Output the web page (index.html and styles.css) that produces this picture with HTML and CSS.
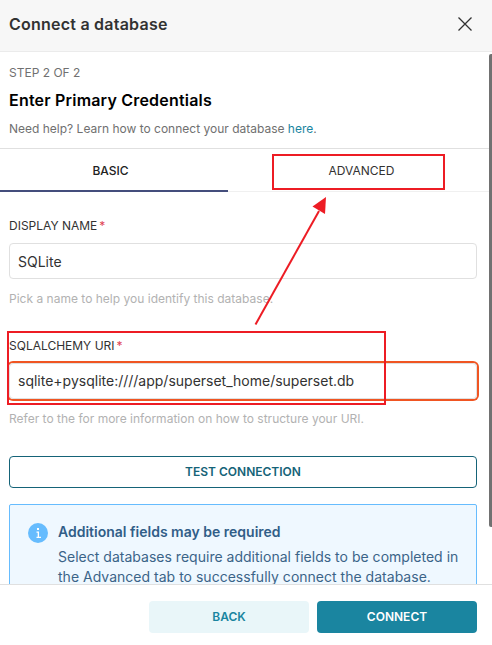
FILE: index.html
```html
<!DOCTYPE html>
<html lang="en">
<head>
<meta charset="utf-8">
<title>Connect a database</title>
<link rel="stylesheet" href="styles.css">
</head>
<body>
<div class="modal">
  <header class="header">
    <h1 class="title">Connect a database</h1>
    <svg class="close" width="14" height="14" viewBox="0 0 14 14"><path d="M.5.5l13 13M13.5.5l-13 13"/></svg>
  </header>
  <main class="body">
    <section class="intro">
      <p class="step">STEP 2 OF 2</p>
      <h2 class="heading">Enter Primary Credentials</h2>
      <p class="help">Need help? Learn how to connect your database <a class="link">here</a>.</p>
    </section>
    <nav class="tabs">
      <div class="tab tab-active">BASIC</div>
      <div class="tab">ADVANCED</div>
    </nav>
    <div class="form">
      <div class="field">
        <div class="label">DISPLAY NAME<span class="required">*</span></div>
        <div class="input">SQLite</div>
        <div class="hint">Pick a name to help you identify this database.</div>
      </div>
      <div class="field">
        <div class="label">SQLALCHEMY URI<span class="required">*</span></div>
        <div class="input input-focus">sqlite+pysqlite:////app/superset_home/superset.db</div>
        <div class="hint">Refer to the for more information on how to structure your URI.</div>
      </div>
      <div class="button test">TEST CONNECTION</div>
      <div class="alert">
        <svg class="info" width="20" height="20" viewBox="0 0 20 20"><circle cx="10" cy="10" r="10" fill="#66bcfe"/><path d="M9 5h2v2H9zM8.500 8.500H11v5.200h2V15H8.500v-1.300H9.700V9.800H8.500z" fill="#fff"/></svg>
        <div class="alert-text">
          <div class="alert-title">Additional fields may be required</div>
          <div class="alert-body">Select databases require additional fields to be completed in the Advanced tab to successfully connect the database.</div>
        </div>
      </div>
    </div>
  </main>
  <footer class="footer">
    <div class="button back">BACK</div>
    <div class="button connect">CONNECT</div>
  </footer>
  <div class="scrollbar"></div>
  <svg class="annotations" width="492" height="645" viewBox="0 0 492 645">
    <rect x="273" y="155" width="171" height="34"/>
    <rect x="8" y="332" width="377" height="72"/>
    <path d="M255.500 324.500L319 211"/>
    <path class="arrowhead" d="M326 197L312.500 206.500L325 214Z"/>
  </svg>
</div>
</body>
</html>
```
FILE: styles.css
```css
* { box-sizing: border-box; }
body {
  margin: 0;
  font-family: Inter, "Liberation Sans", sans-serif;
  font-size: 14px;
  color: #323232;
}
h1, h2, p { margin: 0; }
.modal {
  position: relative;
  display: flex;
  flex-direction: column;
  width: 492px;
  height: 645px;
  overflow: hidden;
  background: #fff;
}
.header {
  flex: none;
  display: flex;
  align-items: center;
  justify-content: space-between;
  height: 52px;
  padding: 0 20px 3px 9px;
  background: #f7f7f7;
  border-bottom: 1px solid #ebebeb;
}
.title { font-size: 16px; line-height: 24px; font-weight: 600; letter-spacing: 0.23px; }
.close { fill: none; stroke: #323232; stroke-width: 1.3; }
.body {
  flex: none;
  height: 532px;
  overflow: hidden;
}
.intro {
  height: 97px;
  padding: 12px 9px 0;
  border-bottom: 1px solid #e0e0e0;
  color: #707070;
}
.step { font-size: 12px; line-height: 18px; }
.heading {
  margin: 6px 0 8px;
  font-size: 16px;
  line-height: 24px;
  font-weight: 600;
  letter-spacing: 0.2px;
  color: #000;
}
.help { font-size: 12px; line-height: 18px; }
.link { color: #1a85a0; }
.tabs {
  display: flex;
  gap: 16px;
  height: 43px;
  margin-left: -7px;
  border-bottom: 1px solid #f0f0f0;
}
.tab {
  width: 235px;
  height: 43px;
  font-size: 12px;
  line-height: 43px;
  text-align: center;
}
.tab-active {
  border-bottom: 2px solid #444e7c;
  font-weight: 500;
  color: #222;
}
.form { padding: 25px 15px 0 9px; }
.field { height: 120px; }
.label { font-size: 12px; line-height: 18px; }
.required { margin-left: 2px; color: #e04355; }
.input {
  height: 36px;
  margin: 8px 0 11px;
  padding: 0 8px;
  border: 1px solid #e0e0e0;
  border-radius: 4px;
  line-height: 36px;
}
.input-focus { line-height: 34px; box-shadow: 0 0 0 2px #f05522; }
.hint { font-size: 12px; line-height: 18px; letter-spacing: 0.01px; color: #b2b2b2; }
.button {
  height: 32px;
  border-radius: 4px;
  font-size: 12px;
  line-height: 32px;
  font-weight: 600;
  text-align: center;
}
.test {
  margin-top: -1px;
  border: 1px solid #156378;
  line-height: 30px;
  color: #156378;
}
.alert {
  display: flex;
  gap: 10px;
  height: 110px;
  margin-top: 16px;
  padding: 18px 15px 0 18px;
  border: 1px solid #66bcfe;
  border-radius: 2px;
  background: #eff8ff;
  color: #3b6488;
}
.info { flex: none; }
.alert-title { margin: -1px 0 5px; line-height: 20px; font-weight: 600; color: #315e88; }
.alert-body { line-height: 20px; letter-spacing: 0.015px; }
.footer {
  display: flex;
  justify-content: flex-end;
  gap: 8px;
  height: 61px;
  padding: 16px 15px 0;
  border-top: 1px solid #e0e0e0;
}
.footer .button { width: 160px; }
.back { background: #e9f6f9; color: #1a85a0; }
.connect { background: #1a85a0; color: #fff; }
.scrollbar {
  position: absolute;
  top: 54px;
  right: 0;
  width: 3px;
  height: 473px;
  border-radius: 2px 0 0 2px;
  background: #717171;
}
.annotations {
  position: absolute;
  top: 0;
  left: 0;
  fill: none;
  stroke: #ed1c24;
  stroke-width: 2;
}
.arrowhead { fill: #ed1c24; stroke: none; }
```
